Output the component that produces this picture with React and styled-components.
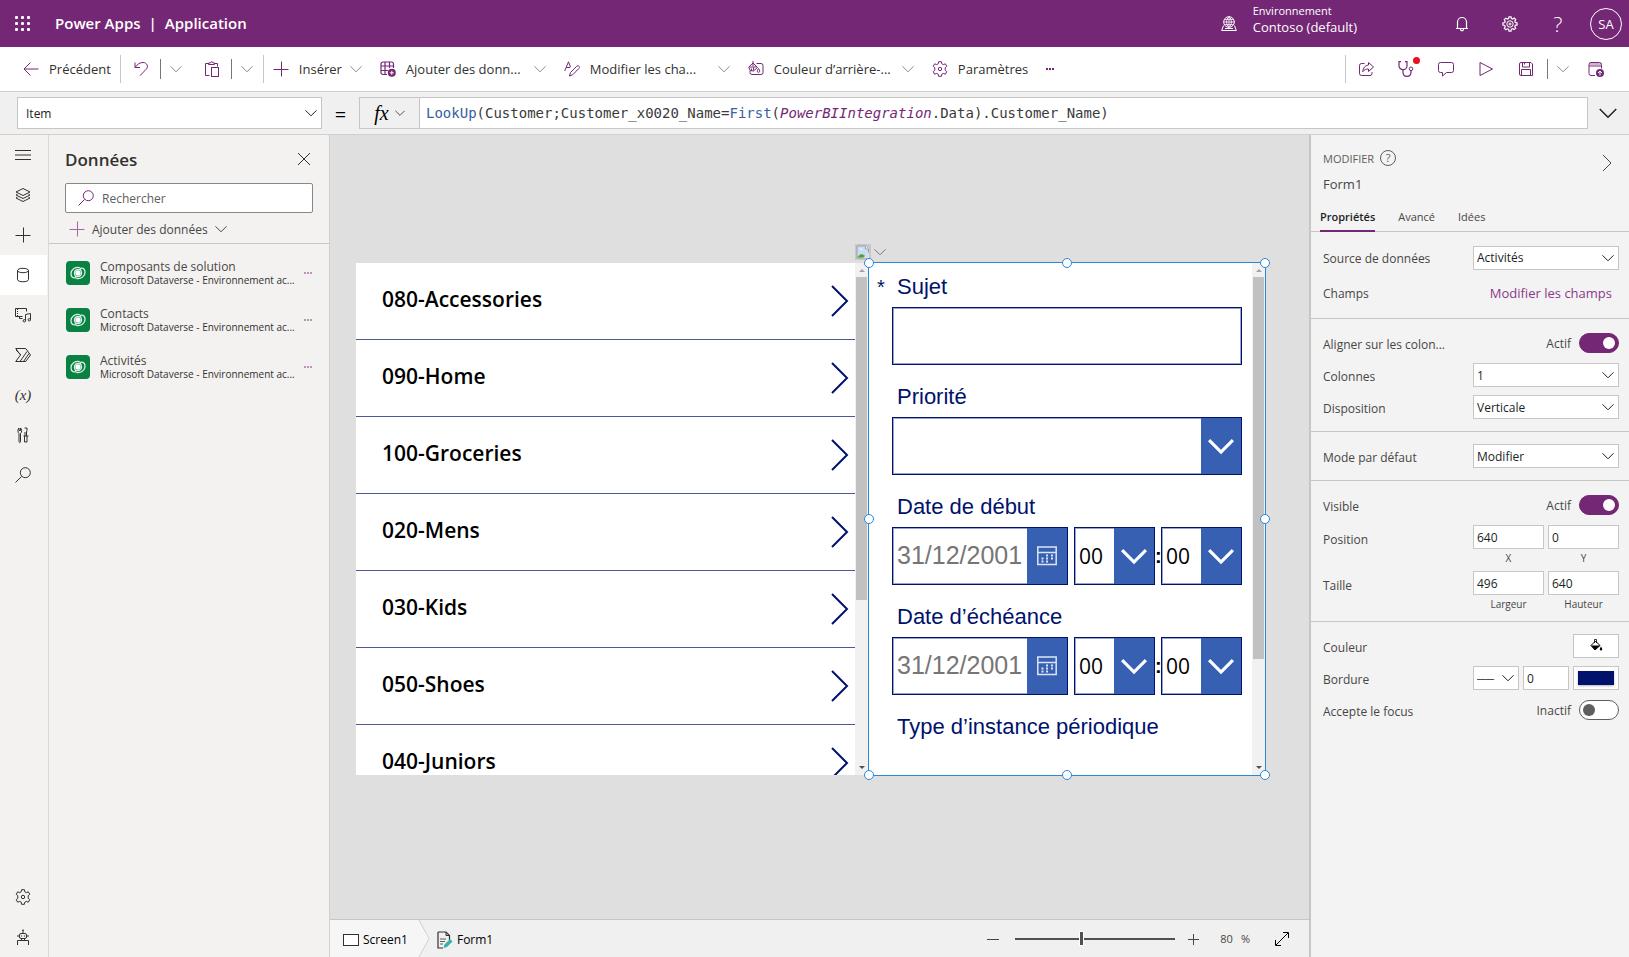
import { useState } from "react";
import styled, { createGlobalStyle } from "styled-components";

const PURPLE = "#742774";
const NAVY = "#00126b";
const BLUE = "#3860b2";

const GlobalStyle = createGlobalStyle`
  * {
    box-sizing: border-box;
  }

  body {
    margin: 0;
    font-family: "Open Sans", "Noto Sans", sans-serif;
    font-size: 12px;
    color: #323130;
  }

  button,
  input,
  select {
    font: inherit;
    color: inherit;
    margin: 0;
  }

  button {
    padding: 0;
    border: 0;
    background: none;
    cursor: pointer;
  }

  a {
    text-decoration: none;
  }
`;

const Page = styled.div`
  display: flex;
  flex-direction: column;
  min-height: 100vh;
`;

/* ---------- icons ---------- */

const Svg = styled.svg`
  display: block;
  flex: none;
  fill: none;
  stroke: currentColor;
  stroke-width: ${(props) => props.$stroke || 1};
`;

function Icon({ size = 16, box = 16, stroke, children }) {
  return (
    <Svg width={size} height={size} viewBox={`0 0 ${box} ${box}`} $stroke={stroke} aria-hidden="true">
      {children}
    </Svg>
  );
}

function Chevron({ size = 12, stroke = 1 }) {
  return (
    <Icon size={size} box={12} stroke={stroke}>
      <path d="M.5 3.3 6 8.8l5.5-5.5" />
    </Icon>
  );
}

const GEAR = "M6.6 .7h2.8l.4 2.1 1.5.8 2-.8 1.5 2.5-1.6 1.4v2.6l1.6 1.4-1.5 2.5-2-.8-1.5.8-.4 2.1H6.6l-.4-2.1-1.5-.8-2 .8-1.5-2.5 1.6-1.4V6.7L1.2 5.3l1.5-2.5 2 .8 1.5-.8z";

const icons = {
  waffle: (
    <g fill="currentColor" stroke="none">
      {[0, 6, 12].map((y) => [0, 6, 12].map((x) => (
        <rect key={`${x}-${y}`} x={x} y={y} width="3" height="3" rx="1" />
      )))}
    </g>
  ),
  environment: (
    <>
      <circle cx="8" cy="6" r="5.3" />
      <path d="M8 .7v10.600M2.700 6h10.600M3.600 3.400h8.800M3.600 8.600h8.800M8 .7C4.800 3 4.800 9 8 11.300M8 .7c3.200 2.300 3.200 8.300 0 10.600" strokeWidth=".8" />
      <path d="M2.500 9.500 .7 14.500h14.600l-1.800-5M4 12.500h8" />
    </>
  ),
  bell: <path d="M3.500 12.500V6a4.500 4.500 0 0 1 9 0v6.500M2 12.500h12M6.500 13c0 2.400 3 2.400 3 0" strokeWidth="1.200" />,
  cog: (
    <>
      <path d="M7 .8h2l.4 1.700 1.300.5 1.500-.9 1.500 1.500-.9 1.500.5 1.300 1.800.5v2l-1.800.4-.5 1.300.9 1.500-1.500 1.500-1.500-.9-1.300.5L9 15.200H7l-.4-1.900-1.300-.5-1.500.9-1.500-1.500.9-1.500-.5-1.300L.9 9V7l1.800-.5.5-1.300-.9-1.500 1.500-1.500 1.500.9 1.300-.5z" strokeWidth="1.200" />
      <circle cx="8" cy="8" r="3.200" />
      <circle cx="8" cy="8" r="1" />
    </>
  ),
  back: <path d="M15.500 8H1M7.500 1.500 1 8l6.500 6.500" />,
  undo: <path d="M2 1.500v5h5M2.200 6.300C4.500 3 7 1.500 10 1.500c4 0 5.800 4 3.200 6.700L7 14.700" />,
  paste: (
    <>
      <path d="M5.500 14.500h-4v-12h3M10.500 2.500h3v3" />
      <path d="M4.500 3.500v-1.500h2c0-1.600 2.500-1.600 2.500 0h1.500v1.500z" />
      <rect x="7.500" y="6.500" width="7" height="9" />
    </>
  ),
  plus: <path d="M8.500 .5v15M.5 8.500h15" />,
  tablePlus: (
    <>
      <path d="M7 13.500H3a2 2 0 0 1-2-2V3a2 2 0 0 1 2-2h8.500a2 2 0 0 1 2 2v4M1 5h12.500M1 9.500h7M5 1v12.500M9.500 1v6" strokeWidth="1.200" />
      <circle cx="11.800" cy="11.800" r="4" fill="currentColor" stroke="none" />
      <path d="M11.800 9.800v4M9.800 11.800h4" stroke="#fff" />
    </>
  ),
  editText: (
    <>
      <path d="M.7 10 4.500 .8 6.500 6M2.200 6.500h4" />
      <path d="m6.500 11.500 6.200-6.200c1.700-1.500 3.700.6 2.200 2.200l-6.300 6.300-3.200 1.200z" />
    </>
  ),
  background: (
    <>
      <path d="M8.500 2.500H13a2 2 0 0 1 2 2v7a2 2 0 0 1-2 2H4a2 2 0 0 1-2-2V10" />
      <path d="M.8 6 5 2l4.500 4.500L5.500 10 2 9.500zM1.500 6h7M5 0V5M3.500 7.500v2M5.500 6.500v3" />
      <path d="M10.500 7.500c-1.800 2.600-1.400 3.800 0 3.800s1.800-1.200 0-3.800z" />
    </>
  ),
  settings: (
    <>
      <path d={GEAR} strokeLinejoin="round" />
      <circle cx="8" cy="8" r="1.700" />
    </>
  ),
  share: (
    <>
      <path d="M6.500 2.500h-3a2 2 0 0 0-2 2v8a2 2 0 0 0 2 2h8.500a2 2 0 0 0 2-2v-1.500" />
      <path d="M10.500 1.500 15.500 6l-5 4.500V8C8 7.800 6.300 8.600 4.700 10.800 5 7 7 4.300 10.500 4z" />
    </>
  ),
  stethoscope: (
    <>
      <path d="M3 .7H1v4a4 4 0 0 0 8 0v-4H7M5 8.700v2.500c0 5.500 8 5.500 8 0V9.500" strokeWidth="1.200" />
      <circle cx="13" cy="7.800" r="1.800" />
    </>
  ),
  comment: <path d="M2.500 1.500h11a2 2 0 0 1 2 2v6a2 2 0 0 1-2 2H8.500l-4 3.500v-3.500h-2a2 2 0 0 1-2-2v-6a2 2 0 0 1 2-2z" />,
  play: <path d="M2 1.500v13L14.500 8z" strokeLinejoin="round" />,
  save: (
    <>
      <path d="M1.500 3a1.500 1.500 0 0 1 1.500-1.500h10l1.500 1.500v11.500H3A1.500 1.500 0 0 1 1.500 13z" />
      <path d="M4.500 1.500v4.500h7v-4.500M3.500 14.500v-6h9v6M6.500 1.500v2" />
    </>
  ),
  publish: (
    <>
      <path d="M7 14.500H3a2 2 0 0 1-2-2v-9a2 2 0 0 1 2-2h8.500a2 2 0 0 1 2 2v4M1 5h12.500" />
      <path d="M1.500 3h11.500" strokeWidth=".7" />
      <circle cx="12" cy="12" r="4" fill="currentColor" stroke="none" />
      <path d="M12 14.500v-4.500M10 12l2-2 2 2" stroke="#fff" />
    </>
  ),
  menu: <path d="M0 3.500h16M0 8h16M0 12.500h16" />,
  layers: <path d="M8 1.500 15 5 8 8.500 1 5zM2.500 7.200 1 8l7 3.500L15 8l-1.500-.8M2.500 10.200 1 11l7 3.500 7-3.500-1.500-.8" />,
  database: (
    <>
      <ellipse cx="8" cy="3.500" rx="5.500" ry="2.200" />
      <path d="M2.500 3.500v9c0 3 11 3 11 0v-9" />
    </>
  ),
  media: (
    <>
      <path d="M7.500 9.500h-7v-8h11v3" />
      <path d="M2.500 2v7.500" strokeDasharray="1 1" />
      <path d="M10.500 13.500v-6l5-1v6" />
      <circle cx="9.300" cy="13.800" r="1.200" />
      <circle cx="14.300" cy="12.800" r="1.200" />
      <path d="M4.500 9.500v2h3" />
    </>
  ),
  flow: <path d="M.7 1.500h10l4.800 6.500-4.800 6.500h-10L5.500 8zM1 3l5 5M5 14.500l7-10M8.500 14.500l5.500-8" />,
  tools: (
    <>
      <path d="M4 6.500C2.500 5.500 2.600 2 4 1v2.500h1.500V1c1.500 1 1.500 4.500 0 5.500v8c0 1.500-1.500 1.500-1.500 0z" />
      <path d="M9.500 1h2.500v2.500l-.5 1.500v4M10 5V9M8.500 9h5M9.500 9v6h2.500V9" />
    </>
  ),
  search: <><circle cx="10.300" cy="5.700" r="5" /><path d="M6.500 9.500.5 15.500" /></>,
  robot: (
    <>
      <rect x="4.500" y="4.500" width="7" height="5" rx="1.500" />
      <path d="M8 1v3.500M3 6v2M13 6v2M6.500 9.500v2M9.500 9.500v2M2.500 16v-4.500h11V16" />
      <path d="M6.500 6.500v1M9.500 6.500v1M8 .5v1.500" strokeWidth="1.200" />
    </>
  ),
  close: <path d="m2 2 12 12M14 2 2 14" />,
  minus: <path d="M2 8.500h12" />,
  zoomIn: <path d="M8.500 3v11M3 8.500h11" />,
  expand: <path d="m2 14 12-12M9 1.500h5.500V7M1.500 9v5.500H7" />,
};

/* ---------- top bar ---------- */

const TopBar = styled.header`
  display: flex;
  align-items: center;
  height: 47px;
  padding: 0 7px 0 15px;
  background: ${PURPLE};
  color: #fff;
`;

const Brand = styled.h1`
  flex: 1;
  display: flex;
  gap: 8px;
  margin: 0 0 2px 24px;
  font-size: 15px;
  font-weight: 600;
`;

const Environment = styled.button`
  display: flex;
  align-items: center;
  gap: 16px;
  margin-right: 97px;
  text-align: left;

  small {
    display: block;
    font-size: 11px;
    line-height: 14px;
  }

  strong {
    display: block;
    font-size: 13px;
    font-weight: 400;
    line-height: 18px;
  }

  span {
    padding-bottom: 8px;
  }
`;

const TopActions = styled.div`
  display: flex;
  align-items: center;
  gap: 32px;

  .help {
    width: 16px;
    font-size: 21px;
    font-weight: 300;
  }
`;

const Avatar = styled.button`
  width: 32px;
  height: 32px;
  margin-left: -8px;
  border: 1px solid #fff;
  border-radius: 50%;
  font-size: 13px;
`;

/* ---------- command bar ---------- */

const CommandBar = styled.div`
  display: flex;
  align-items: center;
  height: 45px;
  padding: 0 16px 0 14px;
  border-bottom: 1px solid #d2d0ce;
  background: #fff;
  white-space: nowrap;

  .spacer {
    flex: 1;
  }
`;

const Command = styled.button`
  display: flex;
  align-items: center;
  height: 32px;
  padding: 0 9px;
  color: ${(props) => (props.$muted ? "#8a8886" : PURPLE)};
  font-size: 13px;

  .label {
    margin-left: 10px;
    color: #323130;
    text-align: left;
  }

  .label.wide {
    width: 120px;
  }

  .more {
    margin-left: 8px;
    color: #8a8886;
  }
`;

const Divider = styled.span`
  width: 1px;
  height: 28px;
  background: #c8c6c4;
`;

const Split = styled.span`
  width: 1px;
  height: 20px;
  margin-left: 2px;
  background: #797775;
`;

const SplitGroup = styled.div`
  display: flex;
  align-items: center;
  margin: 0 1px 0 3px;
`;

const CommandIcons = styled.div`
  display: flex;
  align-items: center;
  gap: 6px;
  margin-left: 3px;

  ${SplitGroup} {
    margin: 0 -5px 0 0;
  }

  ${Split} {
    margin-left: 4px;
  }
`;

const Alert = styled.span`
  position: relative;

  &::after {
    content: "";
    position: absolute;
    top: -4px;
    right: -6px;
    width: 7px;
    height: 7px;
    border-radius: 50%;
    background: #e81123;
  }
`;

/* ---------- formula bar ---------- */

const FormulaBar = styled.div`
  display: flex;
  align-items: center;
  height: 43px;
  padding: 0 12px 0 17px;
  border-bottom: 1px solid #d2d0ce;
  background: #f0f0f0;
`;

const SelectBox = styled.span`
  display: grid;
  align-items: center;
  width: ${(props) => props.$width || "100%"};
  height: ${(props) => props.$height || 24}px;
  border: 1px solid #c8c6c4;
  background: #fff;
  color: #201f1e;

  select {
    grid-area: 1 / 1;
    width: 100%;
    height: 100%;
    padding: 0 ${(props) => props.$pad || 3}px;
    border: 0;
    background: none;
    appearance: none;
  }

  svg {
    grid-area: 1 / 1;
    justify-self: end;
    margin-right: 4px;
    pointer-events: none;
  }
`;

const Equals = styled.span`
  width: 37px;
  padding-top: 4px;
  font-size: 20px;
  line-height: 20px;
  text-align: center;
  color: #000;
`;

const FxButton = styled.button`
  display: flex;
  align-items: center;
  justify-content: center;
  gap: 6px;
  width: 61px;
  height: 32px;
  border: 1px solid #c8c6c4;
  color: #323130;

  i {
    font-family: "Liberation Serif", serif;
    font-size: 20px;
    line-height: 20px;
    color: #000;
  }
`;

const Formula = styled.div`
  flex: 1;
  height: 32px;
  padding-left: 6px;
  border: 1px solid #c8c6c4;
  border-left: 0;
  background: #fff;
  color: #3b3a39;
  font-family: "DejaVu Sans Mono", "Liberation Mono", monospace;
  font-size: 14px;
  line-height: 30px;
  white-space: nowrap;
  overflow: hidden;

  b {
    font-weight: 400;
    color: #3860a2;
  }

  i {
    color: ${PURPLE};
  }
`;

const ExpandFormula = styled.button`
  margin-left: 11px;
  color: #201f1e;
`;

/* ---------- left side ---------- */

const Body = styled.div`
  flex: 1;
  display: flex;
`;

const Rail = styled.nav`
  display: flex;
  flex-direction: column;
  width: 49px;
  border-right: 1px solid #d8d8d8;
  background: #f3f2f1;

  .grow {
    flex: 1;
  }
`;

const RailButton = styled.button`
  display: flex;
  align-items: center;
  justify-content: center;
  width: 47px;
  height: 40px;
  padding-right: 1px;
  background: ${(props) => (props.$active ? "#fff" : "transparent")};
  color: #323130;

  i {
    font-family: "Liberation Serif", serif;
    font-size: 15px;
    line-height: 16px;
  }
`;

const DataPanel = styled.aside`
  width: 281px;
  border-right: 1px solid #d2d0ce;
  background: #f3f2f1;
`;

const PanelTitle = styled.div`
  display: flex;
  align-items: center;
  justify-content: space-between;
  height: 48px;
  padding: 0 17px 0 16px;

  h2 {
    margin: 0;
    font-size: 17px;
    font-weight: 600;
  }
`;

const SearchField = styled.label`
  display: flex;
  align-items: center;
  gap: 8px;
  height: 30px;
  margin: 0 16px;
  padding: 0 12px;
  border: 1px solid #8a8886;
  border-radius: 2px;
  background: #fff;
  color: ${PURPLE};

  input {
    flex: 1;
    min-width: 0;
    padding: 0;
    border: 0;
    outline: 0;
    background: none;
  }

  input::placeholder {
    color: #605e5c;
  }
`;

const AddData = styled.button`
  display: flex;
  align-items: center;
  gap: 7px;
  width: 100%;
  height: 31px;
  padding: 2px 20px 0 20px;
  border-bottom: 1px solid #c8c6c4;
  color: #484644;

  svg:first-child {
    color: #a06aa0;
  }
`;

const SourceList = styled.ul`
  margin: 0;
  padding: 5px 17px 0 17px;
  list-style: none;
`;

const SourceItem = styled.li`
  display: flex;
  align-items: center;
  gap: 10px;
  height: 47px;

  .text {
    flex: 1;
    min-width: 0;
    padding-top: 1px;
    color: #484644;
    line-height: 15px;
    white-space: nowrap;
  }

  small {
    display: block;
    font-size: 10px;
    line-height: 13px;
    color: #323130;
  }
`;

const Dots = styled.button`
  flex: none;
  display: flex;
  gap: 1px;
  align-items: center;
  color: ${PURPLE};
  opacity: ${(props) => (props.$faint ? 0.45 : 1)};

  &::before,
  &::after,
  span {
    content: "";
    width: 2px;
    height: 2px;
    background: currentColor;
  }
`;

/* ---------- canvas ---------- */

const Workspace = styled.main`
  flex: 1;
  min-width: 0;
  display: flex;
  flex-direction: column;
  background: #dfdfdf;
`;

const Stage = styled.div`
  flex: 1;
  padding: 128px 43px 0 26px;
`;

const Artboard = styled.div`
  display: grid;
  grid-template-columns: 512fr 398fr;
  height: 512px;
  background: #fff;
`;

const Gallery = styled.div`
  display: flex;
  min-width: 0;
  height: 512px;

  ul {
    flex: 1;
    height: 100%;
    margin: 0;
    padding: 0;
    overflow: hidden;
    list-style: none;
  }
`;

const GalleryRow = styled.li`
  display: flex;
  align-items: center;
  justify-content: space-between;
  height: 77px;
  padding: 0 6px 0 26px;
  border-bottom: 1px solid #4d5997;
  color: #000;
  font-size: 21px;
  font-weight: 600;

  span {
    padding-bottom: 4px;
  }

  svg {
    color: ${NAVY};
  }
`;

const ScrollTrack = styled.div`
  display: flex;
  flex-direction: column;
  justify-content: space-between;
  align-items: center;
  width: 13px;
  padding: 6px 0;
  background: #f1f1f1;

  &::before,
  &::after {
    content: "";
    border: 3px solid transparent;
  }

  &::before {
    border-top: 0;
    border-bottom-color: #a3a3a3;
  }

  &::after {
    border-bottom: 0;
    border-top-color: #505050;
  }

  span {
    width: 11px;
    height: ${(props) => props.$thumb}px;
    margin: 5px 0 auto;
    background: #c1c1c1;
  }
`;

const FormControl = styled.form`
  position: relative;
  display: flex;
  min-width: 0;
  height: 512px;
  padding-right: 1px;
`;

const Fields = styled.div`
  flex: 1;
  min-width: 0;
  padding: 9px 10px 0 24px;
  overflow: hidden;
`;

const Field = styled.fieldset`
  min-width: 0;
  height: 110px;
  margin: 0;
  padding: 0;
  border: 0;
  color: ${NAVY};
  font-family: "Liberation Sans", Arial, sans-serif;
  font-size: 22px;
`;

const FieldName = styled.label`
  display: block;
  height: 35px;
  padding-left: 5px;
  line-height: 30px;
  white-space: nowrap;

  span {
    float: left;
    width: 20px;
    margin-left: -20px;
    font-size: 20px;
  }
`;

const FieldRow = styled.div`
  display: flex;
  align-items: center;
  gap: 6px;
  position: relative;
`;

const InputFrame = styled.div`
  flex: ${(props) => (props.$width ? "none" : "1")};
  display: flex;
  width: ${(props) => (props.$width ? `${props.$width}px` : "auto")};
  min-width: 0;
  height: 58px;
  border: 1px solid ${NAVY};
  box-shadow: inset 0 0 0 1px #9aa3c9;
  color: ${BLUE};

  input,
  select {
    flex: 1;
    width: 0;
    min-width: 0;
    padding: 0 0 0 4px;
    border: 0;
    background: none;
    appearance: none;
    color: #000;
    font-family: "Open Sans", sans-serif;
    font-size: 21px;
  }

  input::placeholder {
    color: #767676;
    font-family: "Liberation Sans", Arial, sans-serif;
    font-size: 25px;
  }
`;

const FieldButton = styled.span`
  display: flex;
  align-items: center;
  justify-content: center;
  width: 40px;
  background: ${BLUE};
  color: #fff;
`;

const Colon = styled.b`
  position: absolute;
  right: 81px;
  width: 6px;
  text-align: center;
  color: #000;
  font-size: 20px;
`;

const Selection = styled.div`
  position: absolute;
  inset: -1px 0 -1px 0;
  border: 1px solid #2b88d8;
  pointer-events: none;
`;

const Handle = styled.span`
  position: absolute;
  left: ${(props) => props.$x};
  top: ${(props) => props.$y};
  width: 10px;
  height: 10px;
  margin: -5px;
  border: 1px solid #2b88d8;
  border-radius: 50%;
  background: #fff;
`;

const FloatingMenu = styled.button`
  position: absolute;
  top: -19px;
  left: -13px;
  display: flex;
  align-items: center;
  gap: 3px;
  color: #797775;
`;

/* ---------- status bar ---------- */

const StatusBar = styled.footer`
  display: flex;
  align-items: center;
  height: 38px;
  padding-right: 19px;
  border-top: 1px solid #c8c6c4;
  background: #f0f0f0;
  color: #000;
`;

const Crumb = styled.button`
  display: flex;
  align-items: center;
  gap: 4px;
  height: 37px;
  padding-top: 2px;
  padding-left: ${(props) => (props.$first ? 13 : 6)}px;
  background: ${(props) => (props.$first ? "#f6f6f6" : "none")};
`;

const ScreenShape = styled.span`
  width: 16px;
  height: 12px;
  border: 1px solid #323130;
  background: #fff;
`;

const Zoom = styled.div`
  display: flex;
  align-items: center;
  margin-left: auto;
  color: #484644;

  output {
    display: flex;
    gap: 8px;
    margin: 0 24px 0 19px;
    font-size: 11px;
  }

  .fit {
    color: #000;
  }
`;

const Slider = styled.input`
  width: 160px;
  height: 20px;
  margin: 0 10px 0 14px;
  background: linear-gradient(#505050, #505050) center / 100% 2px no-repeat;
  appearance: none;

  &::-webkit-slider-thumb {
    appearance: none;
    width: 3px;
    height: 13px;
    background: #505050;
    box-shadow: 0 0 0 1px #fff;
  }
`;

/* ---------- property panel ---------- */

const Properties = styled.aside`
  width: 320px;
  border-left: 2px solid #c8c6c4;
  background: #f3f3f3;
  color: #484644;
`;

const PropertiesHead = styled.div`
  display: grid;
  grid-template-columns: 1fr auto;
  align-items: center;
  padding: 12px 13px 0 12px;

  .kind {
    display: flex;
    align-items: center;
    gap: 6px;
    height: 22px;
    font-size: 11px;
    color: #605e5c;
  }

  .collapse {
    grid-row: span 2;
    align-self: start;
    padding-top: 7px;
  }

  h3 {
    height: 30px;
    margin: 0;
    font-size: 13px;
    font-weight: 400;
    line-height: 30px;
  }
`;

const HelpBadge = styled.button`
  width: 16px;
  height: 16px;
  border: 1px solid #605e5c;
  border-radius: 50%;
  font-size: 11px;
  line-height: 14px;
`;

const Tabs = styled.div`
  display: flex;
  gap: 23px;
  height: 33px;
  padding-left: 9px;
  border-bottom: 1px solid #c8c6c4;
`;

const Tab = styled.button`
  height: 33px;
  padding-top: 4px;
  border-bottom: 2px solid ${(props) => (props.$active ? PURPLE : "transparent")};
  font-size: 11px;
  font-weight: ${(props) => (props.$active ? 600 : 400)};
  color: ${(props) => (props.$active ? "#201f1e" : "#484644")};
`;

const Section = styled.section`
  padding: 8px 10px 8px 12px;
  border-bottom: ${(props) => (props.$last ? 0 : 1)}px solid #c8c6c4;
`;

const Row = styled.div`
  display: grid;
  grid-template-columns: 1fr 146px;
  align-items: ${(props) => (props.$captions ? "start" : "center")};
  height: ${(props) => props.$height || 32}px;
  padding-top: ${(props) => (props.$captions ? 4 : 0)}px;

  > label,
  > .name {
    padding-top: 3px;
    line-height: 24px;
    white-space: nowrap;
  }

  a {
    justify-self: end;
    padding-right: 7px;
    color: #8a3a8a;
    font-size: 13px;
  }
`;

const Cell = styled.div`
  display: flex;
  align-items: center;
  justify-content: flex-end;
  gap: ${(props) => props.$gap || 4}px;
`;

const Captioned = styled.label`
  flex: 1;
  min-width: 0;
  font-size: 10px;
  line-height: 18px;
  text-align: center;
`;

const NumberInput = styled.input`
  display: block;
  width: ${(props) => props.$width || "100%"};
  height: 24px;
  padding: 0 3px;
  border: 1px solid #c8c6c4;
  background: #fff;
  color: #201f1e;
  font-size: 12px;
`;

const Switch = styled.input`
  width: 40px;
  height: 20px;
  padding: 3px;
  border: 1px solid #605e5c;
  border-radius: 10px;
  background: #fff;
  appearance: none;

  &::before {
    content: "";
    display: block;
    width: 12px;
    height: 12px;
    border-radius: 50%;
    background: #605e5c;
  }

  &:checked {
    border-color: ${PURPLE};
    background: ${PURPLE};
  }

  &:checked::before {
    margin-left: auto;
    background: #fff;
  }
`;

const Swatch = styled.button`
  display: flex;
  align-items: center;
  justify-content: center;
  width: 46px;
  height: 24px;
  border: 1px solid #c8c6c4;
  background: #fff;
  color: #000;

  span {
    width: 36px;
    height: 14px;
    background: ${NAVY};
    box-shadow: 0 1px 2px rgba(0, 0, 0, 0.3);
  }
`;

/* ---------- parts ---------- */

function DataverseLogo() {
  return (
    <Svg width="24" height="24" viewBox="0 0 24 24" aria-hidden="true">
      <rect width="24" height="24" rx="4" fill="#088142" stroke="none" />
      <g stroke="#d8efe2" strokeWidth="1.300">
        <path d="M13.800 6.600C9 5.700 5 8.700 5 12.600c0 2.400 1.500 4.300 3.600 4.300 1 0 1.600-.4 1.600-.4" />
        <path d="M10.200 17.400c4.800.9 8.800-2.100 8.800-6 0-2.400-1.500-4.300-3.600-4.300-1 0-1.600.4-1.600.4" />
        <path d="M14 9c-2.600-1.600-5.600.2-5.600 3 0 1.800.8 3.200 1.800 4.500M10 15c2.600 1.600 5.600-.2 5.600-3 0-1.800-.8-3.200-1.800-4.500" />
      </g>
      <circle cx="12" cy="12" r="2.700" fill="#fff" stroke="none" />
    </Svg>
  );
}

function BrokenImage() {
  return (
    <svg width="16" height="16" viewBox="0 0 16 16" aria-hidden="true">
      <rect width="16" height="16" fill="#c8c8c8" />
      <path d="M2 2h8.500l3 3v9H2z" fill="#c8dcf8" stroke="#9aa3ad" />
      <path d="M10.500 2v3h3" fill="#fff" stroke="#9aa3ad" />
      <path d="M4 5.500c1-1.500 3-1.500 4 0z" fill="#fff" />
      <path d="M2.500 13.500c2-4 5-4.500 8-1l-1 1z" fill="#4ea82e" />
      <path d="m8 14 6-6v6z" fill="#dfdfdf" />
    </svg>
  );
}

function FormGlyph() {
  return (
    <svg width="16" height="18" viewBox="0 0 16 18" fill="none" aria-hidden="true">
      <path d="M1 1h8l3.500 3.500V9M1 1v16h5" stroke="#323130" strokeWidth="1.200" />
      <path d="M9 1v3.500h3.500" stroke="#323130" />
      <path d="M3 8h6M3 10.500h5M3 13h3" stroke="#605e5c" />
      <path d="m6.500 17 1-3.500L13 8l2.500 2.500L10 16z" fill="#38b0b0" />
    </svg>
  );
}

function PaintGlyph() {
  return (
    <svg width="16" height="16" viewBox="0 0 16 16" aria-hidden="true">
      <path d="M3 7.500 7.500 3l4.500 4.500L7 12z" fill="none" stroke="#000" />
      <path d="M3 7.500h9L7 12z" />
      <path d="M6.500 5V1.500h2V5" fill="none" stroke="#000" strokeWidth=".8" />
      <path d="M13 8.500c-1.800 2.800-1.500 4 0 4s1.800-1.200 0-4z" />
    </svg>
  );
}

function CalendarGlyph() {
  return (
    <svg width="20" height="20" viewBox="0 0 20 20" fill="none" stroke="#dbe4f5" aria-hidden="true">
      <path d="M.8 1h18.400v17.500H.8z" strokeWidth="1.500" />
      <path d="M1 6.500h18" strokeWidth="1.500" />
      <path d="M9 9.500h2M14 9.500h2M4.500 12.500h2M9 12.500h2M14 12.500h2M4.500 15.500h2M9 15.500h2" strokeWidth="2" />
    </svg>
  );
}

function Dropdown({ id, value, options = [], width, height, pad }) {
  return (
    <SelectBox $width={width} $height={height} $pad={pad}>
      <select id={id} aria-label={id} defaultValue={value}>
        {[value, ...options].map((option) => <option key={option}>{option}</option>)}
      </select>
      <Chevron />
    </SelectBox>
  );
}

function CommandButton({ icon, label, wide, more }) {
  return (
    <Command type="button">
      <Icon>{icons[icon]}</Icon>
      <span className={wide ? "label wide" : "label"}>{label}</span>
      {more && <span className="more"><Chevron /></span>}
    </Command>
  );
}

function Toggle({ id, on }) {
  const [checked, setChecked] = useState(on);

  return (
    <Cell $gap={8}>
      <span>{checked ? "Actif" : "Inactif"}</span>
      <Switch id={id} type="checkbox" checked={checked} onChange={() => setChecked(!checked)} />
    </Cell>
  );
}

function TimeSelect({ label }) {
  return (
    <InputFrame $width={81}>
      <select aria-label={label}><option>00</option></select>
      <FieldButton><Chevron size={26} stroke={1.5} /></FieldButton>
    </InputFrame>
  );
}

function DateField({ id, label }) {
  return (
    <Field>
      <FieldName htmlFor={id}>{label}</FieldName>
      <FieldRow>
        <InputFrame>
          <input id={id} type="text" placeholder="31/12/2001" />
          <FieldButton><CalendarGlyph /></FieldButton>
        </InputFrame>
        <TimeSelect label="Heures" />
        <Colon>:</Colon>
        <TimeSelect label="Minutes" />
      </FieldRow>
    </Field>
  );
}

const sources = ["Composants de solution", "Contacts", "Activités"];

const categories = [
  "080-Accessories",
  "090-Home",
  "100-Groceries",
  "020-Mens",
  "030-Kids",
  "050-Shoes",
  "040-Juniors",
];

const railItems = [
  ["menu", "Menu"],
  ["layers", "Arborescence"],
  ["plus", "Insérer"],
  ["database", "Données"],
  ["media", "Média"],
  ["flow", "Power Automate"],
  ["variable", "Variables"],
  ["tools", "Outils"],
  ["search", "Rechercher"],
];

const handles = [
  ["0%", "0%"], ["50%", "0%"], ["100%", "0%"],
  ["0%", "50%"], ["100%", "50%"],
  ["0%", "100%"], ["50%", "100%"], ["100%", "100%"],
];

function App() {
  const [panel, setPanel] = useState("database");

  return (
    <Page>
      <GlobalStyle />
      <TopBar>
        <button type="button" aria-label="Lanceur"><Icon>{icons.waffle}</Icon></button>
        <Brand><span>Power Apps</span><span>|</span><span>Application</span></Brand>
        <Environment type="button">
          <Icon>{icons.environment}</Icon>
          <span><small>Environnement</small><strong>Contoso (default)</strong></span>
        </Environment>
        <TopActions>
          <button type="button" aria-label="Notifications"><Icon>{icons.bell}</Icon></button>
          <button type="button" aria-label="Options"><Icon>{icons.cog}</Icon></button>
          <button type="button" className="help">?</button>
          <Avatar type="button">SA</Avatar>
        </TopActions>
      </TopBar>

      <CommandBar>
        <CommandButton icon="back" label="Précédent" />
        <Divider />
        <SplitGroup>
          <Command type="button" aria-label="Annuler"><Icon>{icons.undo}</Icon></Command>
          <Split />
          <Command type="button" aria-label="Historique" $muted><Chevron /></Command>
        </SplitGroup>
        <SplitGroup>
          <Command type="button" aria-label="Coller"><Icon>{icons.paste}</Icon></Command>
          <Split />
          <Command type="button" aria-label="Collage spécial" $muted><Chevron /></Command>
        </SplitGroup>
        <Divider />
        <CommandButton icon="plus" label="Insérer" more />
        <CommandButton icon="tablePlus" label="Ajouter des donn..." wide more />
        <CommandButton icon="editText" label="Modifier les cha..." wide more />
        <CommandButton icon="background" label="Couleur d’arrière-..." wide more />
        <CommandButton icon="settings" label="Paramètres" />
        <Command type="button" aria-label="Plus"><Dots as="span"><span /></Dots></Command>
        <span className="spacer" />
        <Divider />
        <CommandIcons>
          <Command type="button" aria-label="Partager"><Icon>{icons.share}</Icon></Command>
          <Command type="button" aria-label="Vérificateur"><Alert><Icon>{icons.stethoscope}</Icon></Alert></Command>
          <Command type="button" aria-label="Commentaires"><Icon>{icons.comment}</Icon></Command>
          <Command type="button" aria-label="Aperçu"><Icon>{icons.play}</Icon></Command>
          <SplitGroup>
            <Command type="button" aria-label="Enregistrer"><Icon>{icons.save}</Icon></Command>
            <Split />
            <Command type="button" aria-label="Enregistrer sous" $muted><Chevron /></Command>
          </SplitGroup>
          <Command type="button" aria-label="Publier"><Icon>{icons.publish}</Icon></Command>
        </CommandIcons>
      </CommandBar>

      <FormulaBar>
        <Dropdown id="Propriété" value="Item" width="305px" height={32} pad={8} />
        <Equals>=</Equals>
        <FxButton type="button"><i>fx</i><Chevron size={10} /></FxButton>
        <Formula role="textbox" aria-label="Formule" contentEditable suppressContentEditableWarning spellCheck={false}>
          <b>LookUp</b>(Customer;Customer_x0020_Name=<b>First</b>(<i>PowerBIIntegration</i>.Data).Customer_Name)
        </Formula>
        <ExpandFormula type="button" aria-label="Développer"><Chevron size={18} /></ExpandFormula>
      </FormulaBar>

      <Body>
        <Rail>
          {railItems.map(([name, label]) => (
            <RailButton key={name} type="button" aria-label={label} $active={panel === name} onClick={() => setPanel(name)}>
              {name === "variable" ? <i>(x)</i> : <Icon>{icons[name]}</Icon>}
            </RailButton>
          ))}
          <span className="grow" />
          <RailButton type="button" aria-label="Paramètres"><Icon>{icons.settings}</Icon></RailButton>
          <RailButton type="button" aria-label="Assistant"><Icon>{icons.robot}</Icon></RailButton>
        </Rail>

        <DataPanel>
          <PanelTitle>
            <h2>Données</h2>
            <button type="button" aria-label="Fermer"><Icon>{icons.close}</Icon></button>
          </PanelTitle>
          <SearchField>
            <Icon>{icons.search}</Icon>
            <input type="text" placeholder="Rechercher" aria-label="Rechercher" />
          </SearchField>
          <AddData type="button">
            <Icon>{icons.plus}</Icon>
            <span>Ajouter des données</span>
            <Chevron />
          </AddData>
          <SourceList>
            {sources.map((name) => (
              <SourceItem key={name}>
                <DataverseLogo />
                <div className="text">
                  {name}
                  <small>Microsoft Dataverse - Environnement ac...</small>
                </div>
                <Dots type="button" aria-label={`Actions ${name}`} $faint><span /></Dots>
              </SourceItem>
            ))}
          </SourceList>
        </DataPanel>

        <Workspace>
          <Stage>
            <Artboard>
              <Gallery>
                <ul>
                  {categories.map((name) => (
                    <GalleryRow key={name}>
                      <span>{name}</span>
                      <Svg width="18" height="32" viewBox="0 0 18 32" $stroke={2} aria-hidden="true">
                        <path d="m1 1 15 15L1 31" />
                      </Svg>
                    </GalleryRow>
                  ))}
                </ul>
                <ScrollTrack $thumb={323}><span /></ScrollTrack>
              </Gallery>
              <FormControl>
                <Fields>
                  <Field>
                    <FieldName htmlFor="subject"><span>*</span>Sujet</FieldName>
                    <FieldRow><InputFrame><input id="subject" type="text" /></InputFrame></FieldRow>
                  </Field>
                  <Field>
                    <FieldName htmlFor="priority">Priorité</FieldName>
                    <FieldRow>
                      <InputFrame>
                        <select id="priority"><option /></select>
                        <FieldButton><Chevron size={26} stroke={1.5} /></FieldButton>
                      </InputFrame>
                    </FieldRow>
                  </Field>
                  <DateField id="start" label="Date de début" />
                  <DateField id="due" label="Date d’échéance" />
                  <Field><FieldName as="div">Type d’instance périodique</FieldName></Field>
                </Fields>
                <ScrollTrack $thumb={382}><span /></ScrollTrack>
                <FloatingMenu type="button" aria-label="Menu du contrôle"><BrokenImage /><Chevron /></FloatingMenu>
                <Selection>
                  {handles.map(([x, y]) => <Handle key={x + y} $x={x} $y={y} />)}
                </Selection>
              </FormControl>
            </Artboard>
          </Stage>
          <StatusBar>
            <Crumb type="button" $first><ScreenShape />Screen1</Crumb>
            <svg width="23" height="37" viewBox="0 0 23 37" aria-hidden="true">
              <path d="M0 0h11l10 18.500L11 37H0z" fill="#f6f6f6" />
              <path d="m11 0 10 18.500L11 37" fill="none" stroke="#d2d0ce" />
            </svg>
            <Crumb type="button"><FormGlyph />Form1</Crumb>
            <Zoom>
              <button type="button" aria-label="Zoom arrière"><Icon>{icons.minus}</Icon></button>
              <Slider type="range" min="0" max="160" defaultValue="66" aria-label="Zoom" />
              <button type="button" aria-label="Zoom avant"><Icon>{icons.zoomIn}</Icon></button>
              <output><span>80</span><span>%</span></output>
              <button type="button" className="fit" aria-label="Ajuster"><Icon>{icons.expand}</Icon></button>
            </Zoom>
          </StatusBar>
        </Workspace>

        <Properties>
          <PropertiesHead>
            <div className="kind">MODIFIER <HelpBadge type="button">?</HelpBadge></div>
            <button type="button" className="collapse" aria-label="Réduire">
              <Icon size={18} box={18}><path d="m5 1 8 8-8 8" /></Icon>
            </button>
            <h3>Form1</h3>
          </PropertiesHead>
          <Tabs>
            <Tab type="button" $active>Propriétés</Tab>
            <Tab type="button">Avancé</Tab>
            <Tab type="button">Idées</Tab>
          </Tabs>
          <Section>
            <Row $height={35}>
              <label htmlFor="source">Source de données</label>
              <Dropdown id="source" value="Activités" options={["Contacts"]} />
            </Row>
            <Row $height={35}>
              <span className="name">Champs</span>
              <a href="#champs">Modifier les champs</a>
            </Row>
          </Section>
          <Section>
            <Row><label htmlFor="snap">Aligner sur les colon...</label><Toggle id="snap" on /></Row>
            <Row><label htmlFor="columns">Colonnes</label><Dropdown id="columns" value="1" options={["2", "3"]} /></Row>
            <Row><label htmlFor="layout">Disposition</label><Dropdown id="layout" value="Verticale" options={["Horizontale"]} /></Row>
          </Section>
          <Section>
            <Row><label htmlFor="mode">Mode par défaut</label><Dropdown id="mode" value="Modifier" options={["Nouveau"]} /></Row>
          </Section>
          <Section>
            <Row><label htmlFor="visible">Visible</label><Toggle id="visible" on /></Row>
            <Row $height={46} $captions>
              <span className="name">Position</span>
              <Cell>
                <Captioned><NumberInput defaultValue="640" />X</Captioned>
                <Captioned><NumberInput defaultValue="0" />Y</Captioned>
              </Cell>
            </Row>
            <Row $height={46} $captions>
              <span className="name">Taille</span>
              <Cell>
                <Captioned><NumberInput defaultValue="496" />Largeur</Captioned>
                <Captioned><NumberInput defaultValue="640" />Hauteur</Captioned>
              </Cell>
            </Row>
          </Section>
          <Section $last>
            <Row>
              <span className="name">Couleur</span>
              <Cell><Swatch type="button" aria-label="Couleur"><PaintGlyph /></Swatch></Cell>
            </Row>
            <Row>
              <label htmlFor="border">Bordure</label>
              <Cell>
                <Dropdown id="style" value="──" width="46px" />
                <NumberInput id="border" defaultValue="0" $width="46px" />
                <Swatch type="button" aria-label="Couleur de bordure"><span /></Swatch>
              </Cell>
            </Row>
            <Row><label htmlFor="focus">Accepte le focus</label><Toggle id="focus" on={false} /></Row>
          </Section>
        </Properties>
      </Body>
    </Page>
  );
}

export default App;
